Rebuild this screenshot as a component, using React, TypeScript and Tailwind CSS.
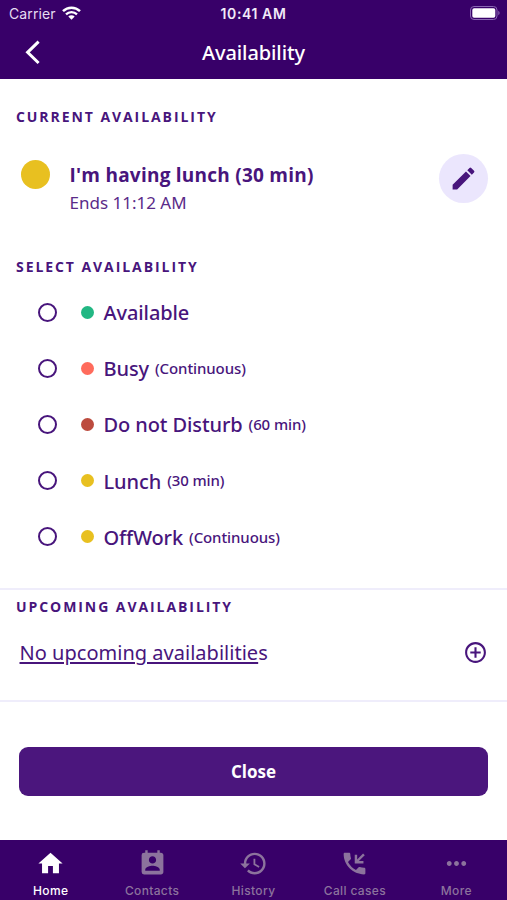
import React, { useState } from "react";
import {
  MdAddCircleOutline,
  MdEdit,
  MdHistory,
  MdHome,
  MdMoreHoriz,
  MdPermContactCalendar,
} from "react-icons/md";

interface Option {
  name: string;
  note?: string;
  dot: string;
}

const options: Option[] = [
  { name: "Available", dot: "bg-[#22b783]" },
  { name: "Busy", note: "(Continuous)", dot: "bg-[#ff6b5c]" },
  { name: "Do not Disturb", note: "(60 min)", dot: "bg-[#bc4b3e]" },
  { name: "Lunch", note: "(30 min)", dot: "bg-[#e8c020]" },
  { name: "OffWork", note: "(Continuous)", dot: "bg-[#e8c020]" },
];

const PhoneIncoming = ({ size }: { size: number }) => (
  <svg width={size} height={size} viewBox="0 0 24 24" fill="currentColor">
    <path d="M20 15.5c-1.25 0-2.45-.2-3.57-.57a1 1 0 0 0-1.02.24l-2.2 2.2a15.05 15.05 0 0 1-6.59-6.58l2.2-2.21a.96.96 0 0 0 .25-1A11.36 11.36 0 0 1 8.5 4c0-.55-.45-1-1-1H4c-.55 0-1 .45-1 1 0 9.39 7.61 17 17 17 .55 0 1-.45 1-1v-3.5c0-.55-.45-1-1-1Z" />
    <path d="M12.2 4.8V12h7.2v-2h-3.8l4.9-4.9-1.4-1.4-4.9 4.9V4.8Z" />
  </svg>
);

const tabs = [
  { label: "Home", icon: MdHome },
  { label: "Contacts", icon: MdPermContactCalendar },
  { label: "History", icon: MdHistory },
  { label: "Call cases", icon: PhoneIncoming },
  { label: "More", icon: MdMoreHoriz },
];

const StatusBar = () => (
  <div className="grid grid-cols-3 items-center h-7 px-[9px] font-['Inter'] text-[14px] leading-7">
    <div className="flex items-center gap-[6px] text-[#e6dcf2]">
      <span className="tracking-[0.1px]">Carrier</span>
      <svg className="-mt-[2px]" width="19" height="14" viewBox="0 0 19 14" fill="none" stroke="white">
        <path d="M1 5.2a12.2 12.2 0 0 1 17 0" strokeWidth="2.5" />
        <path d="M4 8.4a7.9 7.9 0 0 1 11 0" strokeWidth="2.3" />
        <path d="M9.5 13.8 6.3 10.6a4.6 4.6 0 0 1 6.4 0Z" fill="white" stroke="none" />
      </svg>
    </div>
    <span className="text-center font-semibold whitespace-nowrap tracking-[0.6px] text-[#f1eaf8]">
      10:41 AM
    </span>
    <svg className="justify-self-end -mr-[3px] -mt-[2px]" width="31" height="14" viewBox="0 0 31 14">
      <rect x="0.5" y="0.5" width="26.5" height="13" rx="3.5" fill="none" stroke="#8a66b3" />
      <rect x="2.3" y="2.3" width="23" height="9.4" rx="1.8" fill="white" />
      <path d="M28.3 4.8v4.4c1.8-.8 1.8-3.6 0-4.4Z" fill="#8a66b3" />
    </svg>
  </div>
);

const SectionTitle = ({ children }: { children: React.ReactNode }) => (
  <h2 className="px-4 text-[14px] leading-5 font-bold tracking-[1.93px]">
    {children}
  </h2>
);

const App = () => {
  const [selected, setSelected] = useState<string | null>(null);
  const [activeTab, setActiveTab] = useState("Home");

  return (
    <div className="flex flex-col w-full h-[900px] bg-white text-[#48157c] font-['Open_Sans',sans-serif]">
      <header className="h-[79px] bg-[#380069] text-white">
        <StatusBar />
        <div className="grid grid-cols-[64px_1fr_64px] items-center h-[49px]">
          <button className="pl-[25px]">
            <svg width="16" height="25" viewBox="0 0 16 25" fill="none" stroke="white" strokeWidth="3">
              <path d="M13.6 1.6 2.6 12.3l11 10.7" />
            </svg>
          </button>
          <h1 className="text-center text-[20px] leading-7 font-medium tracking-[-0.1px] font-['Noto_Sans']">
            Availability
          </h1>
        </div>
      </header>

      <main className="flex-1 flex flex-col">
        <section className="pt-7">
          <SectionTitle>CURRENT AVAILABILITY</SectionTitle>
          <div className="flex items-start pt-[27px] pl-[20.5px] pr-[19.5px]">
            <span className="size-[29px] mt-[6px] rounded-full bg-[#e8c020]" />
            <div className="flex-1 pl-5 pt-[7px]">
              <p className="text-[19px] leading-7 font-bold tracking-[0.24px]">
                I'm having lunch (30 min)
              </p>
              <p className="text-[17px] leading-7 font-['Noto_Sans'] text-[#5a2b89]">
                Ends 11:12 AM
              </p>
            </div>
            <button className="flex items-center justify-center size-[49px] rounded-full bg-[#ebe6fd]">
              <MdEdit size={29} />
            </button>
          </div>
        </section>

        <section className="pt-10">
          <SectionTitle>SELECT AVAILABILITY</SectionTitle>
          <ul className="pt-[7px] font-['Noto_Sans']">
            {options.map((option) => (
              <li key={option.name}>
                <button
                  onClick={() => setSelected(option.name)}
                  className="flex items-center w-full h-[56.2px] pl-[37.5px]"
                >
                  <span className="flex items-center justify-center size-[19px] rounded-full border-2">
                    {selected === option.name && (
                      <span className="size-[9px] rounded-full bg-[#48157c]" />
                    )}
                  </span>
                  <span className={`size-[13px] ml-6 rounded-full ${option.dot}`} />
                  <span className="flex items-center pl-[10px] font-medium tracking-[-0.1px]">
                    <span className="pt-[2px] text-[20px]">{option.name}</span>
                    {option.note && (
                      <span className="pl-[6px] text-[15px]">{option.note}</span>
                    )}
                  </span>
                </button>
              </li>
            ))}
          </ul>
        </section>

        <section className="h-[114px] mt-[23px] pt-[7px] border-t-2 border-b-2 border-[#efedfb]">
          <SectionTitle>UPCOMING AVAILABILITY</SectionTitle>
          <div className="flex items-center justify-between pt-[22px] pl-[19.5px] pr-[19.5px]">
            <p className="text-[20px] leading-7 tracking-[0.02px] font-['Noto_Sans']">
              <span className="underline decoration-[1.5px] underline-offset-2">
                No upcoming availabilitie
              </span>
              s
            </p>
            <button>
              <MdAddCircleOutline size={25} />
            </button>
          </div>
        </section>

        <button className="h-[49px] mx-[19px] mt-[45px] pt-px rounded-[9px] bg-[#4b167d] text-white text-[17px] font-bold">
          Close
        </button>
      </main>

      <nav className="grid grid-cols-5 h-[60px] bg-[#380069] font-['Inter']">
        {tabs.map(({ label, icon: Icon }) => (
          <button
            key={label}
            onClick={() => setActiveTab(label)}
            className={`flex flex-col items-center pt-[9px] ${
              activeTab === label ? "text-white" : "text-[#8c739d]"
            }`}
          >
            <Icon size={29} />
            <span className="mt-[5px] text-[12px] leading-4 font-medium tracking-[0.35px]">
              {label}
            </span>
          </button>
        ))}
      </nav>
    </div>
  );
};

export default App;
